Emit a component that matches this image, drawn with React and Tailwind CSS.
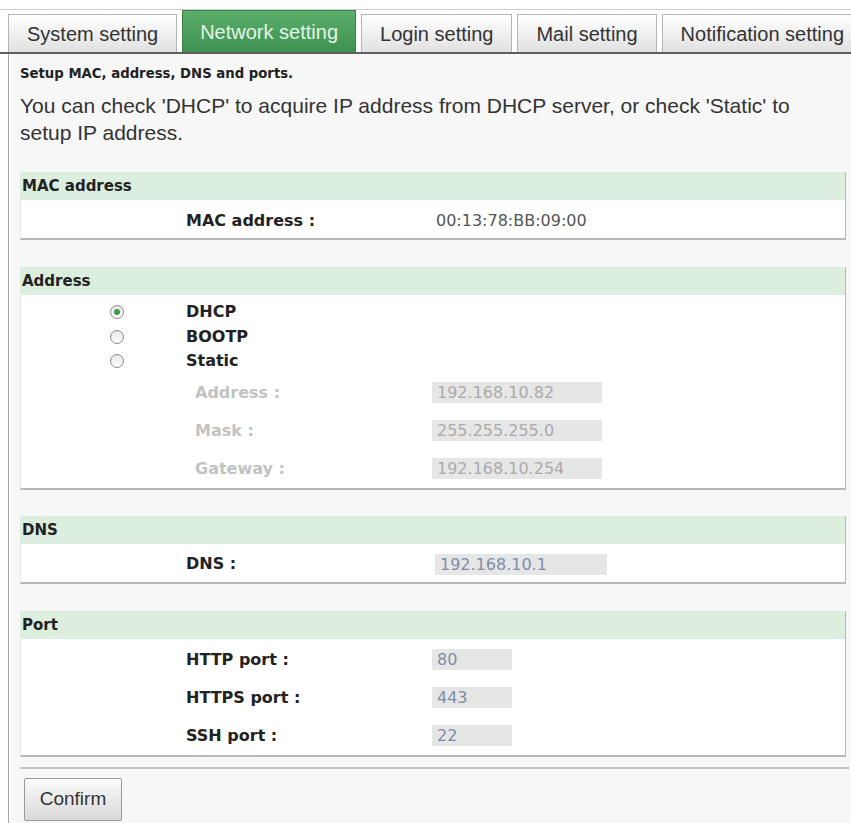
import React from "react";

const tabs = ["System setting", "Network setting", "Login setting", "Mail setting", "Notification setting"];

function Radio({ checked }) {
  return (
    <span className="flex h-[14px] w-[14px] shrink-0 items-center justify-center rounded-full border border-[#8a8a8a] bg-gradient-to-b from-[#e6e6e6] to-white">
      {checked && <span className="h-[6px] w-[6px] rounded-full bg-[#3f9a55]" />}
    </span>
  );
}

function Section({ title, children, className = "" }) {
  return (
    <div className={"w-[826px] " + className}>
      <div className="h-[28px] border-r border-[#b5b5b5] bg-[#dcefdf] pl-[2px] text-[15px] font-bold leading-[28px] text-[#222]">
        {title}
      </div>
      <div className="border-b-2 border-l border-r border-b-[#b8b8b8] border-l-[#e2e2e2] border-r-[#b5b5b5] bg-white">
        {children}
      </div>
    </div>
  );
}

function Box({ value, w, muted }) {
  return (
    <div
      className={
        "h-[21px] bg-[#e6e6e6] pl-[5px] text-[16px] font-normal leading-[21px] " +
        w +
        (muted ? " text-[#ababab]" : " text-[#7f8ea6]")
      }
    >
      {value}
    </div>
  );
}

export default function App() {
  return (
    <div className="h-[823px] w-[851px] overflow-hidden bg-white" style={{ fontFamily: "'DejaVu Sans', Verdana, sans-serif" }}>
      <div className="mt-[9px] border-t border-[#cfcfcf]">
        <div
          className="flex h-[44px] items-end border-b-2 border-[#5f5f5f] pl-[8px] text-[20px]"
          style={{ fontFamily: "'Liberation Sans', Arial, sans-serif" }}
        >
          {tabs.map((t, i) =>
            i === 1 ? (
              <div
                key={t}
                className="mr-[5px] flex h-[42px] shrink-0 items-center border border-b-0 border-[#3d7f4a] bg-gradient-to-b from-[#5aae6a] to-[#3f9152] px-[17px] text-[#e4f4e6]"
              >
                {t}
              </div>
            ) : (
              <div
                key={t}
                className="mr-[5px] flex h-[38px] shrink-0 items-center border border-b-0 border-[#b4b4b4] bg-gradient-to-b from-white to-[#e1e1e1] px-[18px] text-[#333]"
              >
                {t}
              </div>
            )
          )}
        </div>
      </div>

      <div className="ml-[8px] min-h-[770px] border-l border-[#a8a8a8] bg-[#f7f7f7] pl-[11px] pt-[12px]">
        <div className="text-[13.25px] font-bold leading-[16px] text-[#222]">Setup MAC, address, DNS and ports.</div>
        <div
          className="mt-[10px] w-[805px] text-[21px] leading-[27px] text-[#333]"
          style={{ fontFamily: "'Liberation Sans', Arial, sans-serif" }}
        >
          You can check 'DHCP' to acquire IP address from DHCP server, or check 'Static' to setup IP address.
        </div>

        <Section title="MAC address" className="mt-[26px]">
          <div className="flex h-[38px] items-center pt-[4px] text-[16px]">
            <div className="w-[165px]" />
            <div className="w-[250px] font-bold text-[#222]">MAC address :</div>
            <div className="text-[#555]">00:13:78:BB:09:00</div>
          </div>
        </Section>

        <Section title="Address" className="mt-[27px]">
          <div className="pt-[5px] text-[16px] font-bold text-[#222]">
            {[
              ["DHCP", true],
              ["BOOTP", false],
              ["Static", false],
            ].map(([l, c]) => (
              <div key={l} className="flex h-[24.5px] items-center pl-[89px]">
                <Radio checked={c} />
                <span className="ml-[62px]">{l}</span>
              </div>
            ))}
            {[
              ["Address :", "192.168.10.82"],
              ["Mask :", "255.255.255.0"],
              ["Gateway :", "192.168.10.254"],
            ].map(([l, v]) => (
              <div key={l} className="flex h-[38px] items-center">
                <div className="w-[174px]" />
                <div className="w-[237px] text-[#c2c2c2]">{l}</div>
                <Box value={v} w="w-[170px]" muted />
              </div>
            ))}
          </div>
        </Section>

        <Section title="DNS" className="mt-[26px]">
          <div className="flex h-[38px] items-center pt-[3px] text-[16px]">
            <div className="w-[165px]" />
            <div className="w-[249px] font-bold text-[#222]">DNS :</div>
            <Box value="192.168.10.1" w="w-[172px]" />
          </div>
        </Section>

        <Section title="Port" className="mt-[27px]">
          <div className="pt-[2px] text-[16px]">
            {[
              ["HTTP port :", "80"],
              ["HTTPS port :", "443"],
              ["SSH port :", "22"],
            ].map(([l, v]) => (
              <div key={l} className="flex h-[38px] items-center">
                <div className="w-[165px]" />
                <div className="w-[246px] font-bold text-[#222]">{l}</div>
                <Box value={v} w="w-[80px]" />
              </div>
            ))}
          </div>
        </Section>

        <div className="mt-[10px] w-[829px] border-t-2 border-[#c4c4c4]" />
        <button
          className="mt-[9px] ml-[4px] h-[43px] w-[98px] rounded-[2px] border border-[#9a9a9a] bg-gradient-to-b from-[#fbfbfb] to-[#d9d9d9] text-[19px] text-[#333]"
          style={{ fontFamily: "'Liberation Sans', Arial, sans-serif" }}
        >
          Confirm
        </button>
      </div>
    </div>
  );
}
